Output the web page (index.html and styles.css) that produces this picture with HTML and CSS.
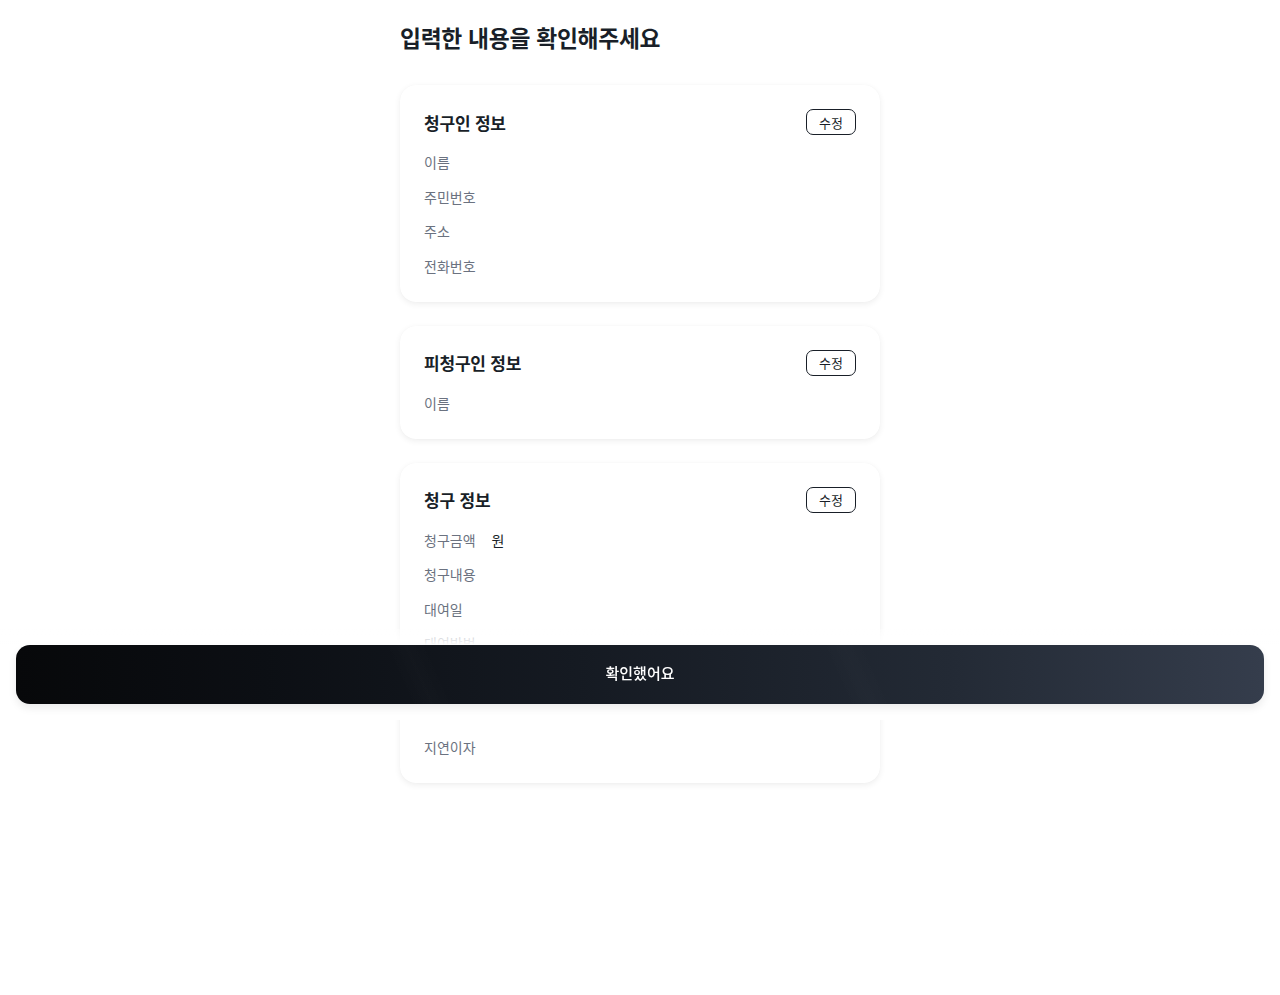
FILE: index.html
```html
<!DOCTYPE html>
<html lang="ko">
<head>
    <meta charset="UTF-8">
    <meta name="viewport" content="width=device-width, initial-scale=1.0">
    <title>입력한 내용을 확인해주세요</title>
    <link rel="stylesheet" href="styles.css">
</head>
<body>
    <main class="page">
        <h1 class="page-title">입력한 내용을 확인해주세요</h1>

        <section class="card">
            <div class="card-head">
                <h2>청구인 정보</h2>
                <button class="edit-btn">수정</button>
            </div>
            <ul class="rows">
                <li><span class="label">이름</span></li>
                <li><span class="label">주민번호</span></li>
                <li><span class="label">주소</span></li>
                <li><span class="label">전화번호</span></li>
            </ul>
        </section>

        <section class="card">
            <div class="card-head">
                <h2>피청구인 정보</h2>
                <button class="edit-btn">수정</button>
            </div>
            <ul class="rows">
                <li><span class="label">이름</span></li>
            </ul>
        </section>

        <section class="card">
            <div class="card-head">
                <h2>청구 정보</h2>
                <button class="edit-btn">수정</button>
            </div>
            <ul class="rows">
                <li><span class="label">청구금액</span><span class="value">원</span></li>
                <li><span class="label">청구내용</span></li>
                <li><span class="label">대여일</span></li>
                <li><span class="label">대여방법</span></li>
                <li><span class="label">변제기일</span></li>
                <li><span class="label">이자율</span></li>
                <li><span class="label">지연이자</span></li>
            </ul>
        </section>
    </main>

    <div class="bottom-bar">
        <button class="confirm-btn">확인했어요</button>
    </div>
</body>
</html>
```

FILE: styles.css
```css
:root {
    --text-dark: #191f28;
    --text-grey: #6b7280;
    --card-bg: #ffffff;
}

* {
    box-sizing: border-box;
}

body {
    margin: 0;
    background: #ffffff;
    font-family: "Noto Sans CJK KR", "Noto Sans", sans-serif;
    color: var(--text-dark);
}

.page {
    width: 480px;
    margin: 0 auto;
    padding: 22px 0 200px;
    display: flex;
    flex-direction: column;
    gap: 24px;
}

.page-title {
    margin: 0 0 7px;
    font-size: 22.8px;
    line-height: 32px;
    font-weight: 700;
    letter-spacing: -0.3px;
}

.card {
    background: var(--card-bg);
    border-radius: 16px;
    box-shadow: 0 2px 6px rgba(0, 0, 0, 0.07), 0 0 1px rgba(0, 0, 0, 0.04);
    padding: 24px 24px 25px;
}

.card-head {
    display: flex;
    justify-content: space-between;
    align-items: center;
    height: 26px;
}

.card-head h2 {
    margin: 0;
    font-size: 17px;
    font-weight: 700;
    letter-spacing: -0.2px;
}

.edit-btn {
    width: 50px;
    height: 26px;
    border: 1px solid #191f28;
    border-radius: 7px;
    background: #fff;
    font-family: inherit;
    font-size: 13px;
    color: #191f28;
    padding: 0;
    cursor: pointer;
}

.rows {
    list-style: none;
    margin: 16px 0 0;
    padding: 0;
    display: flex;
    flex-direction: column;
    gap: 12.5px;
}

.rows li {
    display: flex;
    gap: 16px;
    height: 22px;
    align-items: center;
    font-size: 14px;
}

.label {
    color: var(--text-grey);
}

.value {
    color: var(--text-dark);
}

.bottom-bar {
    position: fixed;
    left: 0;
    right: 0;
    top: 629px;
    padding: 16px 16px 16px;
    background: linear-gradient(to bottom, rgba(255, 255, 255, 0.4) 0, #ffffff 16px);
}

.confirm-btn {
    display: block;
    width: 100%;
    height: 59px;
    padding: 0 0 5px;
    border: none;
    border-radius: 14px;
    font-family: inherit;
    font-size: 15px;
    font-weight: 500;
    color: #ffffff;
    cursor: pointer;
    background:
        repeating-linear-gradient(66deg, rgba(255, 255, 255, 0) 0, rgba(255, 255, 255, 0) 360px, rgba(255, 255, 255, 0.012) 380px, rgba(255, 255, 255, 0) 400px),
        linear-gradient(to right, #07080a 0%, #0c0f14 20%, #151a22 45%, #232a35 75%, #353d4c 100%);
    box-shadow: 0 4px 8px rgba(0, 0, 0, 0.08);
}
```
